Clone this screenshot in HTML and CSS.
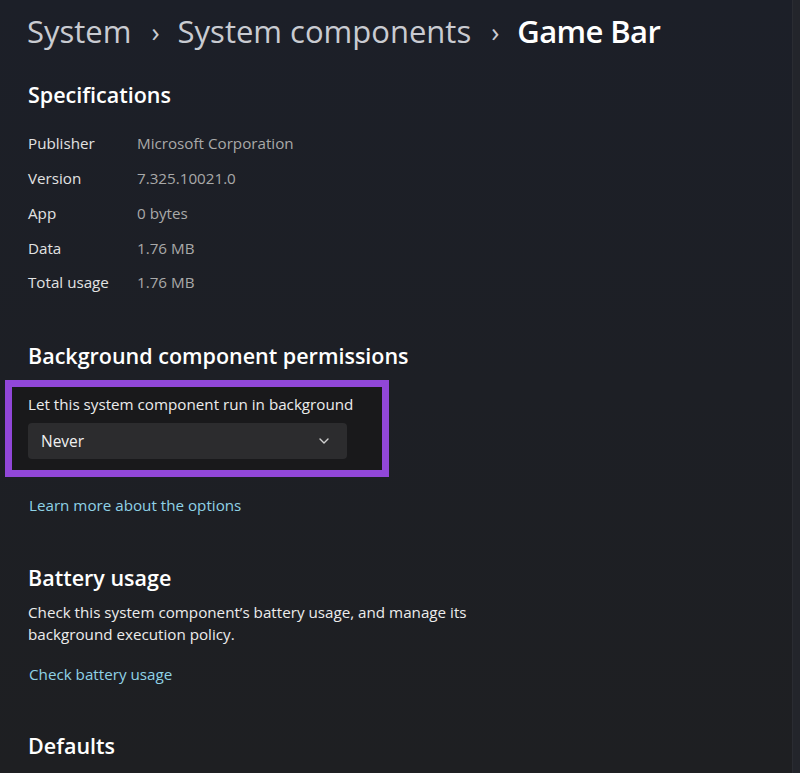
FILE: index.html
```html
<!DOCTYPE html>
<html>
<head>
<meta charset="utf-8">
<link rel="stylesheet" href="styles.css">
</head>
<body>
<div class="page">
  <main class="content">
    <nav class="crumbs">
      <span class="crumb">System</span>
      <span class="sep">&#8250;</span>
      <span class="crumb">System components</span>
      <span class="sep">&#8250;</span>
      <span class="crumb current">Game Bar</span>
    </nav>

    <h2 class="heading spec-heading">Specifications</h2>
    <div class="specs">
      <div class="spec-row"><span class="spec-label">Publisher</span><span class="spec-value">Microsoft Corporation</span></div>
      <div class="spec-row"><span class="spec-label">Version</span><span class="spec-value">7.325.10021.0</span></div>
      <div class="spec-row"><span class="spec-label">App</span><span class="spec-value">0 bytes</span></div>
      <div class="spec-row"><span class="spec-label">Data</span><span class="spec-value">1.76 MB</span></div>
      <div class="spec-row"><span class="spec-label">Total usage</span><span class="spec-value">1.76 MB</span></div>
    </div>

    <h2 class="heading bg-heading">Background component permissions</h2>
    <div class="highlight">
      <div class="field-label">Let this system component run in background</div>
      <div class="dropdown">
        <span class="dropdown-value">Never</span>
        <svg class="chevron" width="12" height="8" viewBox="0 0 12 8"><path d="M2 2 L6 6 L10 2" fill="none" stroke="#d0d0d0" stroke-width="1.4" stroke-linecap="round" stroke-linejoin="round"/></svg>
      </div>
    </div>
    <a class="link learn-link">Learn more about the options</a>

    <h2 class="heading battery-heading">Battery usage</h2>
    <p class="desc">Check this system component’s battery usage, and manage its<br>background execution policy.</p>
    <a class="link battery-link">Check battery usage</a>

    <h2 class="heading defaults-heading">Defaults</h2>
  </main>
  <div class="gutter"></div>
</div>
</body>
</html>
```

FILE: styles.css
```css
html, body {
  margin: 0;
  padding: 0;
}
body {
  width: 800px;
  height: 773px;
  overflow: hidden;
  background: linear-gradient(180deg, #1c1f28 0%, #1d1f25 50%, #1e1f22 100%);
  font-family: "Open Sans", "Noto Sans", sans-serif;
  color: #e8e8e8;
}
.page {
  display: flex;
  height: 773px;
}
.content {
  flex: 1;
  padding-left: 28px;
  display: flex;
  flex-direction: column;
  align-items: flex-start;
}
.gutter {
  width: 7px;
  background: #23252b;
  border-left: 1px solid #2a2c32;
}
.crumbs {
  display: flex;
  align-items: center;
  height: 40px;
  margin-top: 11px;
  margin-left: -1px;
  font-size: 31px;
  color: #c9cbd1;
  font-weight: 500;
}
.sep {
  font-size: 27px;
  margin: 0 18px 0 20px;
  color: #c9cbd1;
}
.crumb.current {
  color: #ffffff;
  font-weight: 600;
  letter-spacing: -0.6px;
}
.heading {
  margin: 0;
  font-weight: 600;
  color: #ffffff;
  font-size: 21.5px;
  line-height: 28px;
}
.spec-heading {
  margin-top: 30px;
}
.specs {
  margin-top: 17px;
  display: flex;
  flex-direction: column;
}
.spec-row {
  display: flex;
  height: 34.75px;
  align-items: center;
  font-size: 15.2px;
}
.spec-label {
  width: 109px;
  color: #e2e2e2;
}
.spec-value {
  color: #a9a9a9;
}
.bg-heading {
  margin-top: 42px;
}
.highlight {
  margin-top: 10px;
  margin-left: -23px;
  width: 354px;
  border: 7px solid #9147d8;
  background: #19191b;
  padding: 7px 0 11px 16px;
}
.field-label {
  font-size: 15.2px;
  line-height: 20px;
  color: #ececec;
}
.dropdown {
  margin-top: 9px;
  width: 319px;
  height: 36px;
  background: #2c2c2e;
  border-radius: 4px;
  display: flex;
  align-items: center;
  justify-content: space-between;
  padding: 0 17px 0 13px;
  box-sizing: border-box;
}
.dropdown-value {
  font-size: 15.5px;
  color: #f0f0f0;
}
.chevron {
  display: block;
}
.link {
  font-size: 15.2px;
  line-height: 20px;
  color: #8fd2e6;
}
.learn-link {
  margin-top: 18px;
  margin-left: 1px;
}
.battery-heading {
  margin-top: 49px;
}
.desc {
  margin: 9px 0 0 0;
  font-size: 15.2px;
  line-height: 22px;
  color: #ececec;
}
.battery-link {
  margin-top: 19px;
  margin-left: 1px;
}
.defaults-heading {
  margin-top: 48px;
}
```
